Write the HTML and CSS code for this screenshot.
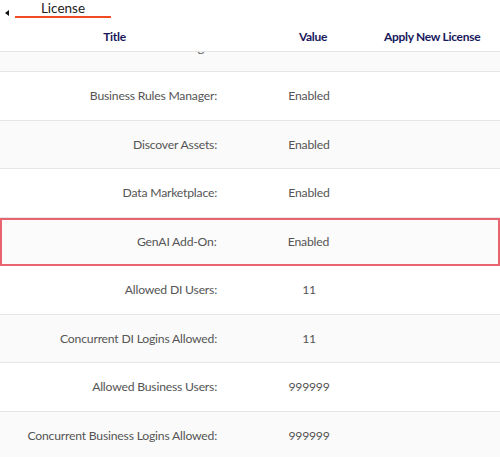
FILE: index.html
```html
<!DOCTYPE html>
<html>
<head>
<meta charset="utf-8">
<link rel="stylesheet" href="styles.css">
</head>
<body>
<div class="page">
  <div class="tabbar">
    <span class="tri"></span>
    <div class="tab">License</div>
  </div>
  <div class="thead">
    <div class="h1">Title</div>
    <div class="h2">Value</div>
    <div class="h3">Apply New License</div>
  </div>
  <div class="tbody">
    <div class="rows">
      <div class="row alt"><div class="c1">Reference Data Manager:</div><div class="c2">Enabled</div></div>
      <div class="row"><div class="c1">Business Rules Manager:</div><div class="c2">Enabled</div></div>
      <div class="row alt"><div class="c1">Discover Assets:</div><div class="c2">Enabled</div></div>
      <div class="row"><div class="c1">Data Marketplace:</div><div class="c2">Enabled</div></div>
      <div class="row alt hl"><div class="c1">GenAI Add-On:</div><div class="c2">Enabled</div></div>
      <div class="row"><div class="c1">Allowed DI Users:</div><div class="c2">11</div></div>
      <div class="row alt"><div class="c1">Concurrent DI Logins Allowed:</div><div class="c2">11</div></div>
      <div class="row"><div class="c1">Allowed Business Users:</div><div class="c2">999999</div></div>
      <div class="row alt"><div class="c1">Concurrent Business Logins Allowed:</div><div class="c2">999999</div></div>
    </div>
  </div>
</div>
</body>
</html>
```
FILE: styles.css
```css
html, body {
  margin: 0;
  padding: 0;
  background: #fff;
}
body {
  font-family: Lato, "Open Sans", sans-serif;
  font-size: 12.2px;
  letter-spacing: -0.2px;
  color: #555;
}
.page {
  width: 500px;
  height: 457px;
  overflow: hidden;
  display: flex;
  flex-direction: column;
}
.tabbar {
  height: 22px;
  display: flex;
  align-items: flex-start;
  padding-left: 5px;
  box-sizing: border-box;
}
.tri {
  width: 0;
  height: 0;
  margin-top: 10px;
  border-top: 3px solid transparent;
  border-bottom: 3px solid transparent;
  border-right: 4px solid #111;
}
.tab {
  margin-left: 6px;
  width: 96px;
  height: 16px;
  text-align: center;
  color: #222;
  font-size: 13.5px;
  letter-spacing: 0;
  line-height: 16px;
  border-bottom: 2.5px solid #f04b24;
}
.thead {
  height: 30px;
  box-sizing: border-box;
  border-bottom: 1px solid #e6e6e6;
  display: flex;
  align-items: center;
  color: #17175c;
  font-weight: 700;
  font-size: 12px;
  letter-spacing: -0.3px;
  white-space: nowrap;
}
.h1 {
  width: 229px;
  text-align: center;
}
.h2 {
  width: 142px;
  padding-left: 13px;
  text-align: center;
}
.h3 {
  flex: 1;
}
.tbody {
  flex: 1;
  overflow: hidden;
}
.rows {
  margin-top: -28.5px;
}
.row {
  height: 48.5px;
  box-sizing: border-box;
  border-bottom: 1px solid #e6e6e6;
  display: grid;
  grid-template-columns: 217px 12px 160px;
  align-items: center;
  background: #fff;
}
.row.alt {
  background: #fafafa;
}
.c1 {
  grid-column: 1;
  text-align: right;
  white-space: nowrap;
}
.c2 {
  grid-column: 3;
  text-align: center;
}
.row.hl {
  border: 2.5px solid #e8646f;
  background: #fbfbfb;
  grid-template-columns: 214.5px 12px 160px;
}
```
